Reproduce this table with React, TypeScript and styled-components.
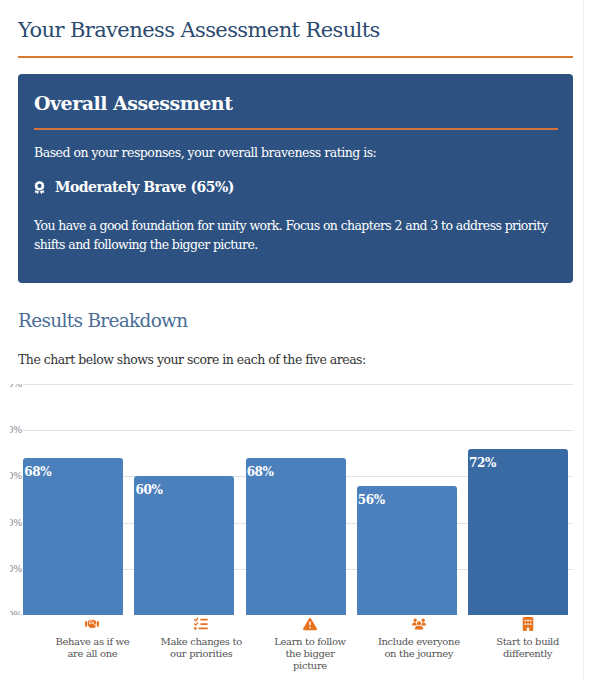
import styled, { createGlobalStyle } from "styled-components";
import { FaAward, FaHandshake, FaListCheck, FaTriangleExclamation, FaUsers, FaBuilding } from "react-icons/fa6";
import { ReactNode } from "react";

type Area = {
  score: number
  lines: string[]
  icon: ReactNode
  highlight?: boolean
}

const areas: Area[] = [
  { score: 68, lines: ["Behave as if we", "are all one"], icon: <FaHandshake /> },
  { score: 60, lines: ["Make changes to", "our priorities"], icon: <FaListCheck /> },
  { score: 68, lines: ["Learn to follow", "the bigger", "picture"], icon: <FaTriangleExclamation /> },
  { score: 56, lines: ["Include everyone", "on the journey"], icon: <FaUsers /> },
  { score: 72, lines: ["Start to build", "differently"], icon: <FaBuilding />, highlight: true },
]

const ticks = ["100%", "80%", "60%", "40%", "20%", "0%"]

const PLOT_HEIGHT = 231

export default function App() {
  return (<>
    <GlobalStyle />
    <Page>
      <Title>Your Braveness Assessment Results</Title>

      <SummaryCard>
        <CardHeading>Overall Assessment</CardHeading>
        <CardText>Based on your responses, your overall braveness rating is:</CardText>
        <Rating>
          <FaAward />
          <span>Moderately Brave (65%)</span>
        </Rating>
        <CardParagraph>
          You have a good foundation for unity work. Focus on chapters 2 and 3 to address priority
          shifts and following the bigger picture.
        </CardParagraph>
      </SummaryCard>

      <SectionTitle>Results Breakdown</SectionTitle>
      <Intro>The chart below shows your score in each of the five areas:</Intro>

      <ChartClip>
        <Plot>
          <Grid>
            {ticks.map(t => (
              <GridLine key={t}>
                <Tick>{t}</Tick>
              </GridLine>
            ))}
          </Grid>
          <Bars>
            {areas.map((a, i) => (
              <Bar key={i} $dark={a.highlight} style={{ height: (a.score / 100) * PLOT_HEIGHT }}>
                <BarValue>{a.score}%</BarValue>
              </Bar>
            ))}
          </Bars>
        </Plot>
      </ChartClip>

      <Categories>
        {areas.map((a, i) => (
          <Category key={i}>
            <CategoryIcon>{a.icon}</CategoryIcon>
            {a.lines.map(l => <span key={l}>{l}</span>)}
          </Category>
        ))}
      </Categories>
    </Page>
  </>)
}

const GlobalStyle = createGlobalStyle`
  html, body {
    margin: 0;
    padding: 0;
    background: #fff;
  }
  body {
    font-family: "DejaVu Serif", "Liberation Serif", serif;
    color: #333;
  }
`

const Page = styled.div`
  width: 555px;
  min-height: 680px;
  padding: 17px 10px 0 18px;
  border-right: 1px solid #f1f2f3;
  box-sizing: content-box;
`

const Title = styled.h1`
  margin: 0;
  padding-bottom: 13px;
  border-bottom: 2.5px solid #d9782f;
  font-size: 21px;
  line-height: 26px;
  font-weight: normal;
  letter-spacing: -0.6px;
  color: #2b4a6f;
`

const SummaryCard = styled.section`
  margin-top: 16px;
  background: #2d5281;
  border-radius: 4px;
  padding: 17px 15px 29px 16px;
  color: #fff;
`

const CardHeading = styled.h2`
  margin: 0;
  padding-bottom: 13px;
  border-bottom: 2.5px solid #d5733a;
  font-size: 19px;
  line-height: 24px;
  font-weight: bold;
  letter-spacing: -0.5px;
`

const CardText = styled.p`
  margin: 13px 0 0;
  font-size: 12.5px;
  line-height: 20px;
  letter-spacing: -0.5px;
`

const Rating = styled.div`
  display: flex;
  align-items: center;
  gap: 9px;
  margin-top: 13px;
  font-size: 14px;
  line-height: 22px;
  font-weight: bold;
  letter-spacing: -0.5px;

  svg {
    font-size: 13px;
    margin-left: -1px;
  }
`

const CardParagraph = styled.p`
  margin: 18px 0 0;
  font-size: 12.5px;
  line-height: 19px;
  letter-spacing: -0.6px;
`

const SectionTitle = styled.h2`
  margin: 26px 0 0;
  font-size: 18.5px;
  line-height: 24px;
  font-weight: normal;
  letter-spacing: -0.7px;
  color: #4a6e96;
`

const Intro = styled.p`
  margin: 17px 0 0;
  font-size: 12.5px;
  line-height: 20px;
  letter-spacing: -0.5px;
  color: #333;
`

const ChartClip = styled.div`
  margin: 14px 0 0 -8px;
  padding-left: 13px;
  overflow: hidden;
`

const Plot = styled.div`
  position: relative;
  width: 550px;
  height: ${PLOT_HEIGHT}px;
`

const Grid = styled.div`
  position: absolute;
  inset: 0 0 -1px 0;
  display: flex;
  flex-direction: column;
  justify-content: space-between;
`

const GridLine = styled.div`
  position: relative;
  height: 1px;
  background: #e2e2e2;
`

const Tick = styled.span`
  position: absolute;
  right: 100%;
  top: -6px;
  margin-right: 1px;
  white-space: nowrap;
  font-size: 9.5px;
  line-height: 12px;
  letter-spacing: -0.3px;
  color: #888;
`

const Bars = styled.div`
  position: absolute;
  inset: 0;
  display: flex;
  align-items: flex-end;
  gap: 11.2px;
  padding-left: 0.3px;
`

const Bar = styled.div<{ $dark?: boolean }>`
  width: 100px;
  flex: none;
  border-radius: 3px 3px 0 0;
  background: ${p => p.$dark ? "#3a6aa3" : "#4c80bc"};
  box-sizing: border-box;
  padding: 6px 0 0 1px;
`

const BarValue = styled.span`
  display: block;
  font-size: 12px;
  line-height: 16px;
  font-weight: bold;
  letter-spacing: -0.4px;
  color: #fff;
`

const Categories = styled.div`
  display: grid;
  grid-template-columns: repeat(5, 1fr);
  width: 544px;
  margin: 2px 0 0 20px;
`

const Category = styled.div`
  display: flex;
  flex-direction: column;
  align-items: center;
  font-size: 10px;
  line-height: 12px;
  letter-spacing: -0.35px;
  color: #555;
  text-align: center;
`

const CategoryIcon = styled.span`
  display: flex;
  height: 15px;
  margin-bottom: 4px;
  font-size: 14px;
  color: #e8721e;
`
